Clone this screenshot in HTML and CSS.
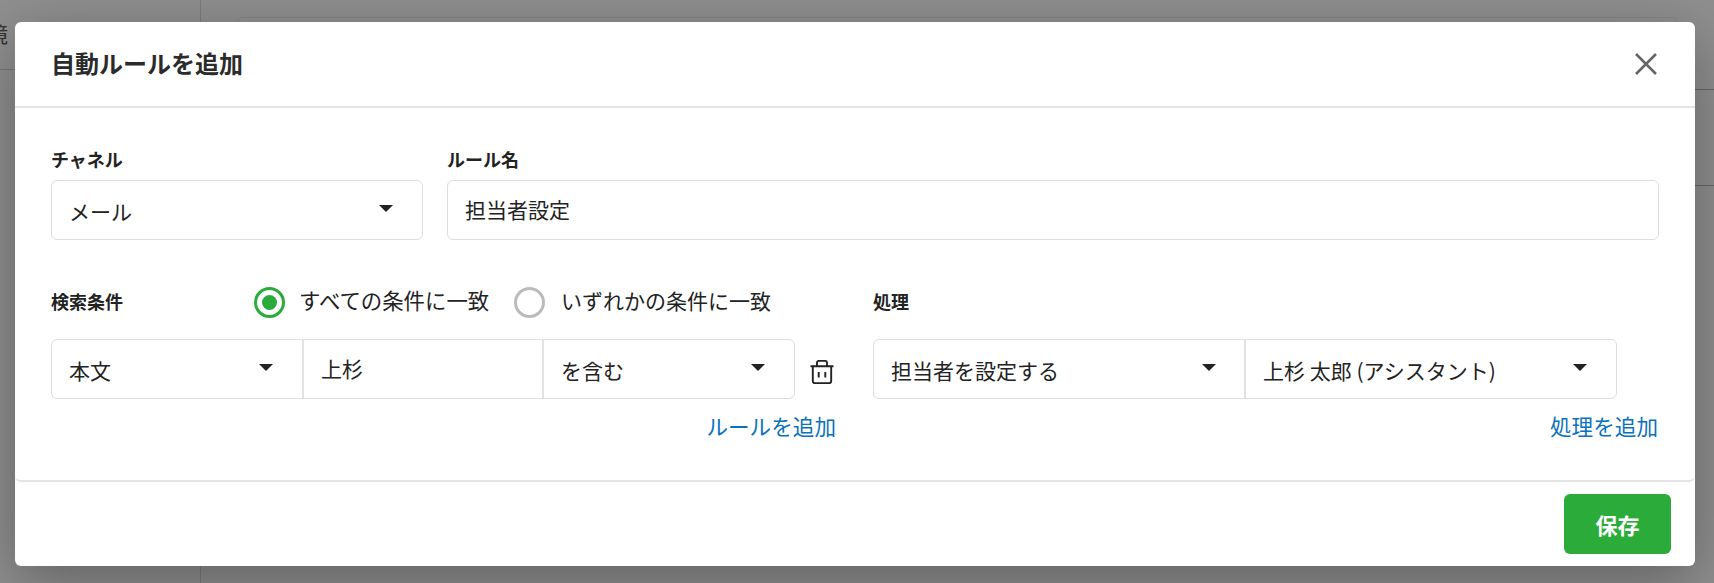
FILE: index.html
```html
<!DOCTYPE html>
<html lang="ja">
<head>
<meta charset="utf-8">
<title>自動ルールを追加</title>
<link rel="stylesheet" href="styles.css">
</head>
<body>
<div class="backdrop">
  <span class="bg-vline"></span>
  <span class="bg-card"></span>
  <span class="bg-text">境</span>
  <span class="bg-line bg-line-left"></span>
  <span class="bg-line bg-line-r1"></span>
  <span class="bg-line bg-line-r2"></span>
</div>
<main class="modal">
  <header class="modal-header">
    <h1 class="modal-title">自動ルールを追加</h1>
    <svg class="close-icon" viewBox="0 0 22 22" width="22" height="22" aria-hidden="true"><path d="M1 1 21 21M21 1 1 21"/></svg>
  </header>
  <section class="modal-body">
    <div class="row-top">
      <div class="field field-channel">
        <label class="label">チャネル</label>
        <div class="control select"><span class="value">メール</span><i class="caret"></i></div>
      </div>
      <div class="field field-name">
        <label class="label">ルール名</label>
        <div class="control"><span class="value input-value">担当者設定</span></div>
      </div>
    </div>
    <div class="row-bottom">
      <div class="col col-left">
        <div class="col-head">
          <span class="label label-cond">検索条件</span>
          <span class="radio radio-on"></span>
          <span class="radio-text radio-text-first">すべての条件に一致</span>
          <span class="radio"></span>
          <span class="radio-text">いずれかの条件に一致</span>
        </div>
        <div class="rule-row">
          <div class="group group-left">
            <div class="cell cell-a select"><span class="value">本文</span><i class="caret"></i></div>
            <div class="cell cell-b"><span class="value input-value">上杉</span></div>
            <div class="cell cell-c select"><span class="value">を含む</span><i class="caret"></i></div>
          </div>
          <svg class="trash" viewBox="0 0 24 24" width="24" height="24" aria-hidden="true"><path d="M.5 6.200H23.500M7 6V2.800C7 1.400 8 .9 9 .9H15C16 .9 17 1.400 17 2.800V6M2.800 6.500V21C2.800 22.600 3.800 23.200 5 23.200H19C20.200 23.200 21.200 22.600 21.200 21V6.500M8.700 12V17.500M15.300 12V17.500"/></svg>
        </div>
        <a class="link">ルールを追加</a>
      </div>
      <div class="col col-right">
        <div class="col-head"><span class="label">処理</span></div>
        <div class="rule-row">
          <div class="group group-right">
            <div class="cell cell-d select"><span class="value">担当者を設定する</span><i class="caret"></i></div>
            <div class="cell cell-e select"><span class="value">上杉 太郎 (アシスタント)</span><i class="caret"></i></div>
          </div>
        </div>
        <a class="link link-right">処理を追加</a>
      </div>
    </div>
  </section>
  <footer class="modal-footer">
    <button class="save" type="button">保存</button>
  </footer>
</main>
</body>
</html>
```
FILE: styles.css
```css
* { box-sizing: border-box; }
html, body { margin: 0; height: 100%; overflow: hidden; }
body {
  width: 1714px;
  height: 583px;
  position: relative;
  padding: 22px 19px 17px 15px;
  font-family: "Noto Sans CJK JP", "Noto Sans", sans-serif;
  color: #222;
  background: #8f8f8f;
}
.backdrop { position: absolute; inset: 0; background: #8f8f8f; overflow: hidden; }
.bg-vline { position: absolute; left: 200px; top: 0; width: 1px; height: 583px; background: #7c7c7c; }
.bg-card { position: absolute; left: 237px; top: 17px; width: 1440px; height: 10px; border: 1px solid #868686; border-radius: 6px; }
.bg-text { position: absolute; left: -13px; top: 20px; font-size: 21px; line-height: 26px; color: #333; }
.bg-line { position: absolute; height: 1px; background: #787878; }
.bg-line-left { left: 0; top: 69px; width: 15px; }
.bg-line-r1 { left: 1695px; top: 89px; width: 19px; background: #666; }
.bg-line-r2 { left: 1695px; top: 185px; width: 19px; background: #666; }

.modal {
  position: relative;
  width: 1680px;
  height: 544px;
  background: #fff;
  border-radius: 6px;
  box-shadow: 0 16px 60px rgba(0, 0, 0, .32);
  display: flex;
  flex-direction: column;
}
.modal-header {
  height: 86px;
  flex: none;
  border-bottom: 2px solid #e4e4e4;
  padding: 0 38px 0 36px;
  display: flex;
  align-items: center;
  justify-content: space-between;
}
.modal-title { margin: -2px 0 0; font-size: 24px; line-height: 32px; font-weight: 700; color: #2b2b2b; }
.close-icon { fill: none; stroke: #666; stroke-width: 2.600; margin-top: 0; }

.modal-body {
  height: 374px;
  flex: none;
  padding: 39px 36px 0;
  border-bottom: 2px solid #e4e4e4;
  border-radius: 0 0 6px 6px;
}
.row-top { display: flex; gap: 24px; }
.field-channel { width: 372px; flex: none; }
.field-name { flex: 1; }
.label { display: block; font-size: 18px; line-height: 24px; font-weight: 700; color: #222; }
.field .label { margin-bottom: 9px; }
.col-head .label { margin-top: -2px; }
.control {
  height: 60px;
  border: 1px solid #ddd;
  border-radius: 6px;
  display: flex;
  align-items: center;
  padding: 0 17px;
  justify-content: space-between;
}
.value { font-size: 21px; line-height: 28px; white-space: nowrap; margin-top: 2px; }
.input-value { margin-top: -2px; }
.caret {
  width: 0; height: 0; flex: none;
  border-left: 7.500px solid transparent;
  border-right: 7.500px solid transparent;
  border-top: 7.500px solid #222;
  margin-top: -3px;
}
.control.select { padding-right: 29px; }

.row-bottom { display: flex; gap: 38px; margin-top: 46px; }
.col { display: flex; flex-direction: column; }
.col-left { width: 784px; flex: none; }
.col-right { flex: 1; }
.col-head { height: 32px; display: flex; align-items: center; margin-bottom: 21px; }
.label-cond { width: 203px; flex: none; }
.radio { width: 31px; height: 31px; flex: none; border: 3px solid #bbb; border-radius: 50%; background: #fff; }
.radio-on { border-color: #2bac3a; padding: 5px; background: #2bac3a content-box; }
.radio-text { margin: -4px 0 0 16px; font-size: 21px; line-height: 28px; white-space: nowrap; }
.radio-text-first { margin-left: 14px; width: 215px; flex: none; font-size: 21.400px; }
.rule-row { display: flex; align-items: center; height: 60px; }
.group { display: flex; height: 60px; border: 1px solid #ddd; border-radius: 6px; flex: none; }
.group-left { width: 744px; }
.group-right { width: 744px; }
.cell { height: 100%; display: flex; align-items: center; justify-content: space-between; padding: 0 29px 0 17px; flex: none; }
.cell-a { width: 250px; }
.cell-b { width: 240px; border-left: 2px solid #e2e2e2; }
.cell-c { flex: 1; border-left: 2px solid #e2e2e2; }
.cell-d { width: 370px; padding-right: 28px; }
.cell-e { flex: 1; border-left: 2px solid #e2e2e2; }
.trash { margin: 6px 0 0 15px; fill: none; stroke: #222; stroke-width: 1.900; }
.link { align-self: flex-end; margin: 13px -1px 0 0; font-size: 21.600px; line-height: 28px; color: #0a72bc; }
.link-right { margin-right: 1px; }

.modal-footer { flex: 1; display: flex; justify-content: flex-end; align-items: flex-start; padding: 12px 24px 0 0; }
.save {
  width: 107px; height: 60px;
  border: 0; border-radius: 6px;
  background: #2bac3a; color: #fff;
  font: 700 22px/28px "Noto Sans CJK JP", sans-serif;
}
```
